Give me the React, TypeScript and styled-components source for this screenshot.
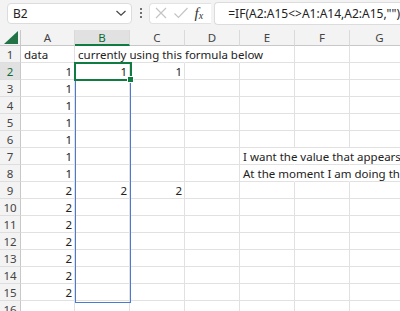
import styled, { createGlobalStyle } from 'styled-components';

const GlobalStyle = createGlobalStyle`
  html, body {
    margin: 0;
    padding: 0;
    background: #f3f3f3;
    overflow: hidden;
    font-family: "Noto Sans", "Open Sans", sans-serif;
  }
`;

const COLS = ['A', 'B', 'C', 'D', 'E', 'F', 'G'];

// row data: text cells spill to the right like in Excel
const rows: { a?: string; b?: string; c?: string; e?: string; b1?: string; a1?: string }[] = [
  { a1: 'data', b1: 'currently using this formula below' },
  { a: '1', b: '1', c: '1' },
  { a: '1' },
  { a: '1' },
  { a: '1' },
  { a: '1' },
  { a: '1', e: 'I want the value that appears in column B for each new value in column A' },
  { a: '1', e: 'At the moment I am doing this with the formula' },
  { a: '2', b: '2', c: '2' },
  { a: '2' },
  { a: '2' },
  { a: '2' },
  { a: '2' },
  { a: '2' },
  { a: '2' },
  {},
];

export default function App() {
  return (
    <>
      <GlobalStyle />
      <Page>
        <FormulaBar>
          <NameBox>
            <span>B2</span>
            <svg width="12" height="8" viewBox="0 0 12 8">
              <path d="M1.5 2 L6 6.2 L10.5 2" fill="none" stroke="#444" strokeWidth="1.2" />
            </svg>
          </NameBox>
          <Dots>
            <i />
            <i />
            <i />
          </Dots>
          <IconBox>
            <svg width="14" height="14" viewBox="0 0 14 14">
              <path d="M2 2 L12 12 M12 2 L2 12" stroke="#c4c4c4" strokeWidth="1.2" />
            </svg>
            <svg width="16" height="14" viewBox="0 0 16 14">
              <path d="M1.5 7.5 L5.5 11.5 L14.5 2" fill="none" stroke="#c4c4c4" strokeWidth="1.2" />
            </svg>
            <Fx>
              f<sub>x</sub>
            </Fx>
          </IconBox>
          <FormulaInput>=IF(A2:A15&lt;&gt;A1:A14,A2:A15,"")</FormulaInput>
        </FormulaBar>

        <Sheet>
          <Corner>
            <svg width="14" height="13" viewBox="0 0 14 13">
              <path d="M14 0 L14 13 L0 13 Z" fill="#217346" />
            </svg>
          </Corner>
          {COLS.map((c) => (
            <ColHeader key={c} $active={c === 'B'}>
              {c}
            </ColHeader>
          ))}

          {rows.map((r, i) => {
            const n = i + 1;
            return [
              <RowHeader key={`h${n}`} $active={n === 2}>
                {n}
              </RowHeader>,
              <Cell key={`a${n}`} $num={!r.a1}>
                {r.a1 ?? r.a}
              </Cell>,
              <Cell key={`b${n}`} $num={!r.b1} $spill={!!r.b1}>
                {r.b1 ?? r.b}
              </Cell>,
              <Cell key={`c${n}`} $num $spill={!!r.b1}>
                {r.c}
              </Cell>,
              <Cell key={`d${n}`} $spill={!!r.b1} />,
              <Cell key={`e${n}`} $spill={!!r.e}>
                {r.e}
              </Cell>,
              <Cell key={`f${n}`} $spill={!!r.e} />,
              <Cell key={`g${n}`} $spill={!!r.e} />,
            ];
          })}

          <SpillRange />
          <ActiveCell>
            <FillHandle />
          </ActiveCell>
        </Sheet>
      </Page>
    </>
  );
}

const Page = styled.div`
  width: 400px;
  height: 311px;
  overflow: hidden;
  background: #f3f3f3;
`;

const FormulaBar = styled.div`
  display: flex;
  align-items: center;
  height: 26px;
  padding: 0 0 0 7px;
  margin-bottom: 4px;
`;

const NameBox = styled.div`
  box-sizing: border-box;
  width: 125px;
  height: 21px;
  background: #fff;
  border: 1px solid #dcdcdc;
  border-radius: 4px;
  display: flex;
  align-items: center;
  justify-content: space-between;
  padding: 0 4px 0 5px;
  font-size: 12px;
  color: #222;
`;

const Dots = styled.div`
  width: 18px;
  display: flex;
  flex-direction: column;
  align-items: center;
  gap: 2px;

  i {
    display: block;
    width: 2px;
    height: 2px;
    background: #444;
    border-radius: 1px;
  }
`;

const IconBox = styled.div`
  box-sizing: border-box;
  height: 21px;
  width: 62px;
  background: #fff;
  border: 1px solid #e2e2e2;
  border-right: none;
  border-radius: 4px 0 0 4px;
  display: flex;
  align-items: center;
  gap: 5px;
  padding-left: 4px;
`;

const Fx = styled.span`
  font-family: "Liberation Serif", serif;
  font-style: italic;
  font-size: 15px;
  color: #333;
  line-height: 1;

  sub {
    font-size: 10px;
    vertical-align: -1px;
  }
`;

const FormulaInput = styled.div`
  box-sizing: border-box;
  flex: 1;
  height: 23px;
  margin-left: 3px;
  background: #fff;
  border: 1px solid #dcdcdc;
  border-right: none;
  border-radius: 4px 0 0 4px;
  display: flex;
  align-items: center;
  padding-left: 13px;
  font-size: 12px;
  color: #222;
  white-space: nowrap;
`;

const Sheet = styled.div`
  position: relative;
  display: grid;
  grid-template-columns: 21px 54px 55px 55px 55px 55px 55px 60px;
  grid-template-rows: 16px repeat(16, 17px);
  background: #fff;
  font-size: 11.5px;
  color: #222;
`;

const Corner = styled.div`
  background: #f3f3f3;
  border-right: 1px solid #c8c8c8;
  border-bottom: 1px solid #c8c8c8;
  display: flex;
  align-items: flex-end;
  justify-content: flex-start;
  padding: 0 0 1px 4px;
  box-sizing: border-box;
`;

const ColHeader = styled.div<{ $active?: boolean }>`
  box-sizing: border-box;
  display: flex;
  align-items: center;
  justify-content: center;
  background: ${({ $active }) => ($active ? '#e1e1e1' : '#f3f3f3')};
  color: ${({ $active }) => ($active ? '#0e6b37' : '#444')};
  border-right: 1px solid #dadada;
  border-bottom: ${({ $active }) => ($active ? '2px solid #107c41' : '1px solid #c8c8c8')};
  font-size: 11.5px;
`;

const RowHeader = styled.div<{ $active?: boolean }>`
  box-sizing: border-box;
  display: flex;
  align-items: center;
  justify-content: center;
  background: ${({ $active }) => ($active ? '#e1e1e1' : '#f3f3f3')};
  color: ${({ $active }) => ($active ? '#0e6b37' : '#444')};
  border-right: 1px solid #c8c8c8;
  border-bottom: 1px solid #dedede;
  font-size: 11.5px;
`;

const Cell = styled.div<{ $num?: boolean; $spill?: boolean }>`
  box-sizing: border-box;
  display: flex;
  align-items: center;
  justify-content: ${({ $num }) => ($num ? 'flex-end' : 'flex-start')};
  padding: 1px 2px 0 3px;
  border-right: 1px solid ${({ $spill }) => ($spill ? 'transparent' : '#e1e1e1')};
  border-bottom: 1px solid #e1e1e1;
  white-space: nowrap;
  overflow: visible;
  min-width: 0;
`;

const SpillRange = styled.div`
  position: absolute;
  left: 75px;
  top: 33px;
  width: 56px;
  height: 240px;
  border: 1px solid #4a7bd0;
  box-sizing: border-box;
  pointer-events: none;
`;

const ActiveCell = styled.div`
  position: absolute;
  left: 74px;
  top: 32px;
  width: 58px;
  height: 19px;
  border: 2px solid #107c41;
  box-sizing: border-box;
`;

const FillHandle = styled.div`
  position: absolute;
  right: -4px;
  bottom: -4px;
  width: 5px;
  height: 5px;
  background: #107c41;
  border: 1px solid #fff;
`;
